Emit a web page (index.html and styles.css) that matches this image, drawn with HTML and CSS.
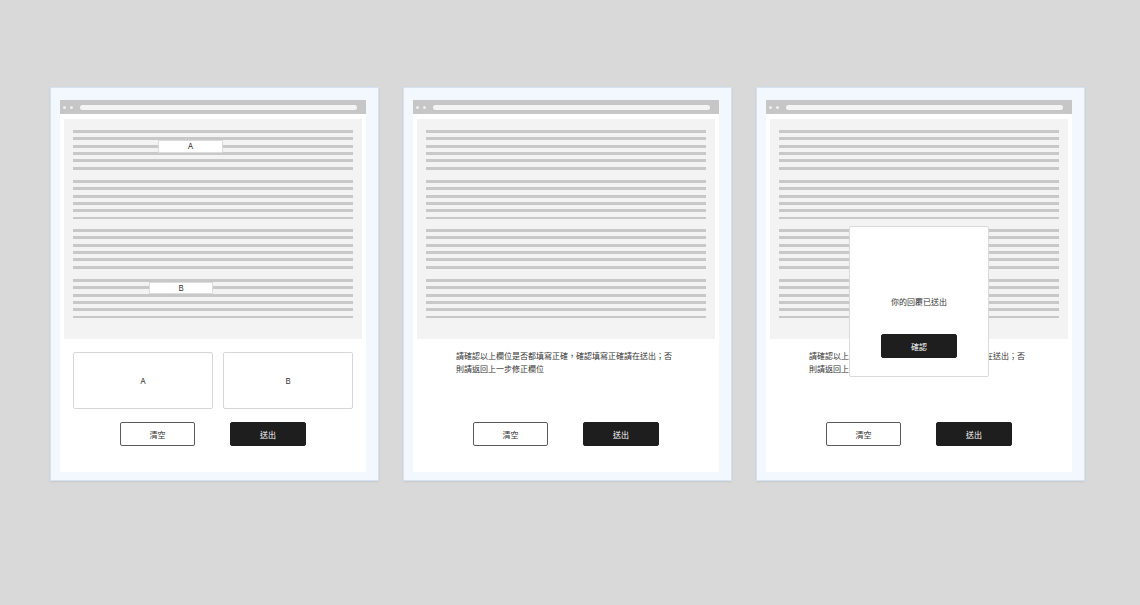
FILE: index.html
```html
<!DOCTYPE html>
<html lang="zh-Hant">
<head>
    <meta charset="UTF-8">
    <meta name="viewport" content="width=device-width, initial-scale=1.0">
    <title>送出流程</title>
    <link rel="stylesheet" href="styles.css">
</head>
<body>

    <div class="board">

        <!-- Step 1: fill in -->
        <div class="frame">
            <div class="window">
                <div class="bar"><span class="dot"></span><span class="dot"></span><span class="url"></span></div>
                <div class="sheet">
                    <div class="para"></div>
                    <div class="para"></div>
                    <div class="para"></div>
                    <div class="para last"></div>
                    <div class="field field-a">A</div>
                    <div class="field field-b">B</div>
                </div>
                <div class="middle answers">
                    <div class="answer answer-a">A</div>
                    <div class="answer answer-b">B</div>
                </div>
                <div class="actions">
                    <button class="btn">清空</button>
                    <button class="btn btn-dark">送出</button>
                </div>
            </div>
        </div>

        <!-- Step 2: confirm -->
        <div class="frame">
            <div class="window">
                <div class="bar"><span class="dot"></span><span class="dot"></span><span class="url"></span></div>
                <div class="sheet">
                    <div class="para"></div>
                    <div class="para"></div>
                    <div class="para"></div>
                    <div class="para last"></div>
                </div>
                <div class="middle notice">
                    <p>請確認以上欄位是否都填寫正確，確認填寫正確請在送出；否則請返回上一步修正欄位</p>
                </div>
                <div class="actions">
                    <button class="btn">清空</button>
                    <button class="btn btn-dark">送出</button>
                </div>
            </div>
        </div>

        <!-- Step 3: sent -->
        <div class="frame">
            <div class="window">
                <div class="bar"><span class="dot"></span><span class="dot"></span><span class="url"></span></div>
                <div class="sheet">
                    <div class="para"></div>
                    <div class="para"></div>
                    <div class="para"></div>
                    <div class="para last"></div>
                </div>
                <div class="middle notice">
                    <p>請確認以上欄位是否都填寫正確，確認填寫正確請在送出；否則請返回上一步修正欄位</p>
                </div>
                <div class="actions">
                    <button class="btn">清空</button>
                    <button class="btn btn-dark">送出</button>
                </div>
                <div class="modal">
                    <p>你的回覆已送出</p>
                    <button class="btn btn-dark">確認</button>
                </div>
            </div>
        </div>

    </div>

</body>
</html>
```

FILE: styles.css
```css
body {
    margin: 0;
    padding: 0;
    background-color: #d9d9d9;
    font-family: Inter, "Noto Sans CJK TC", sans-serif;
    color: #333;
    height: 605px;
    overflow: hidden;
}

.board {
    display: flex;
    gap: 24px;
    padding: 87px 0 0 50px;
}

.frame {
    width: 329px;
    box-sizing: border-box;
    border: 1px solid #d3e3f1;
    background-color: #f2f8fe;
    padding: 12px 12px 8px 9px;
    box-shadow: 0 1px 2px rgba(0, 0, 0, 0.08);
}

.window {
    position: relative;
    height: 372px;
    background-color: #fff;
    display: flex;
    flex-direction: column;
}

.bar {
    height: 14px;
    background-color: #c6c6c6;
    display: flex;
    align-items: center;
    padding: 0 9px 0 3px;
}

.dot {
    width: 3px;
    height: 3px;
    border-radius: 50%;
    background-color: #efefef;
    margin-right: 4px;
}

.url {
    flex: 1;
    height: 5px;
    margin-left: 3px;
    border-radius: 3px;
    background-color: #f4f4f4;
}

.sheet {
    position: relative;
    margin: 5px 4px 0;
    padding: 11px 9px 21px;
    background-color: #f3f3f3;
}

.para {
    height: 39.6px;
    margin-bottom: 10px;
    background: repeating-linear-gradient(#c8c8c8 0, #c8c8c8 3px, transparent 3px, transparent 7.32px);
}

.para.last {
    margin-bottom: 0;
}

.field {
    position: absolute;
    box-sizing: border-box;
    background-color: #fff;
    border: 1px solid #dcdcdc;
    font-size: 8px;
    text-align: center;
}

.field-a {
    left: 94px;
    top: 21px;
    width: 65px;
    height: 13px;
    line-height: 11px;
}

.field-b {
    left: 85px;
    top: 163px;
    width: 64px;
    height: 12px;
    line-height: 10px;
}

.middle {
    height: 70px;
    box-sizing: border-box;
}

.answers {
    display: flex;
    gap: 10px;
    padding: 13px 13px 0;
}

.answer {
    height: 57px;
    box-sizing: border-box;
    border: 1px solid #d6d6d6;
    border-radius: 2px;
    display: flex;
    align-items: center;
    justify-content: center;
    font-size: 8px;
}

.answer-a {
    width: 140px;
}

.answer-b {
    width: 130px;
}

.notice {
    padding: 11px 43px 0;
}

.notice p {
    margin: 0;
    font-size: 8px;
    line-height: 12.7px;
    font-family: "Noto Sans CJK TC", sans-serif;
}

.actions {
    display: flex;
    justify-content: center;
    gap: 35px;
    margin-top: 13px;
}

.btn {
    width: 75px;
    height: 24px;
    box-sizing: border-box;
    border: 1px solid #5a5a5a;
    border-radius: 2px;
    background-color: #fff;
    color: #333;
    font-size: 8px;
    font-family: "Noto Sans CJK TC", sans-serif;
    padding: 0;
}

.btn-dark {
    width: 76px;
    background-color: #1e1e1e;
    border-color: #1e1e1e;
    color: #fff;
}

.modal {
    position: absolute;
    left: 83px;
    top: 126px;
    width: 140px;
    height: 151px;
    box-sizing: border-box;
    border: 1px solid #dadada;
    border-radius: 2px;
    background-color: #fff;
    padding-top: 69px;
    display: flex;
    flex-direction: column;
    align-items: center;
}

.modal p {
    margin: 0;
    font-size: 8px;
    line-height: 12px;
    font-family: "Noto Sans CJK TC", sans-serif;
}

.modal .btn {
    margin-top: 26px;
}
```
